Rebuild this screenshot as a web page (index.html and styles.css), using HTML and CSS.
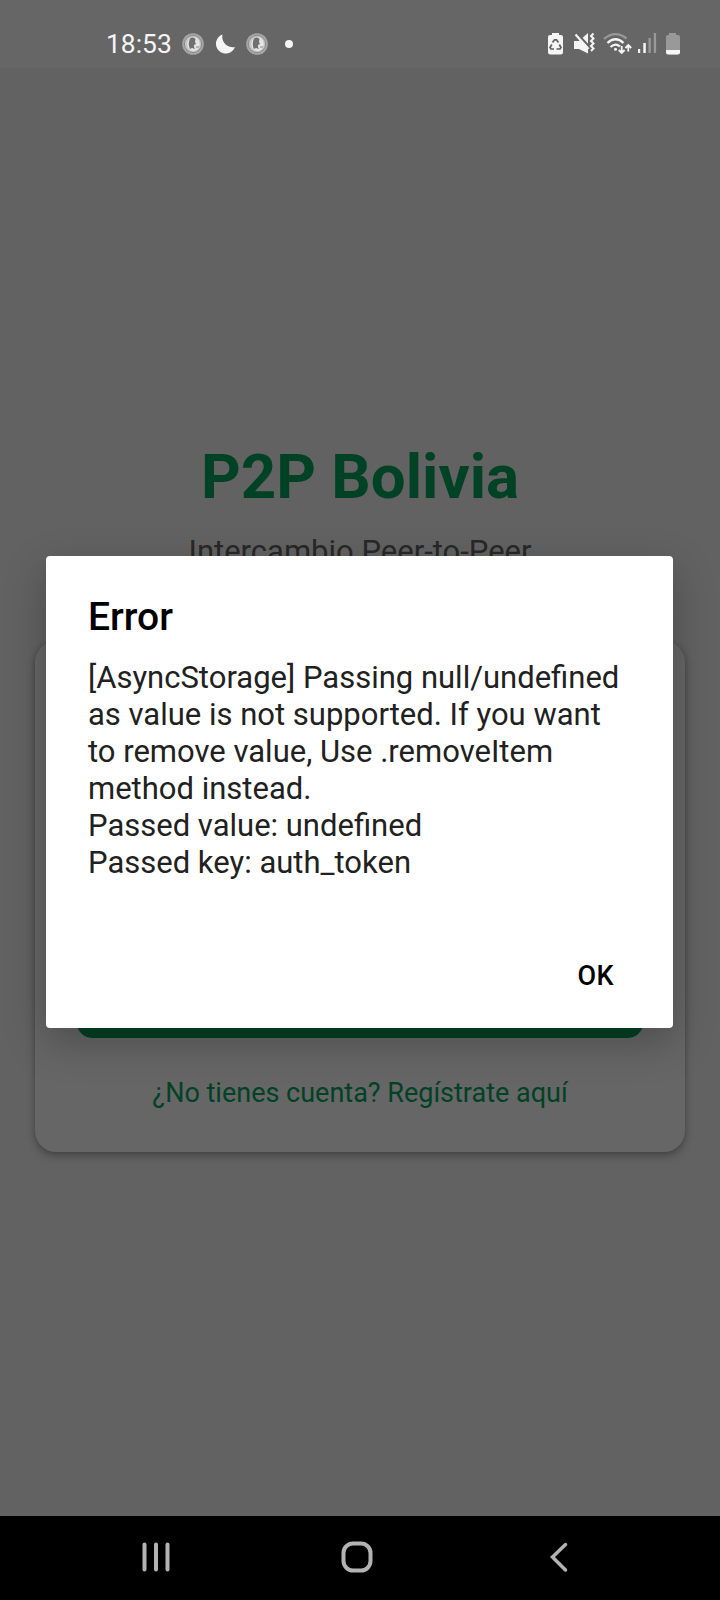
FILE: index.html
```html
<!DOCTYPE html>
<html lang="es">
<head>
<meta charset="utf-8">
<title>P2P Bolivia</title>
<link rel="stylesheet" href="styles.css">
</head>
<body>
<div class="screen">
  <header class="status">
    <span class="clock">18:53</span>
    <svg class="ic-left" width="120" height="32" viewBox="176 28 120 32">
      <defs>
        <g id="coin">
          <circle r="10.8" fill="#a6a6a6"/>
          <circle r="8.600" fill="#c4c4c4" stroke="#8c8c8c" stroke-width="1"/>
          <ellipse cx=".5" cy="0" rx="6.300" ry="7" fill="#e4e4e4"/>
          <path d="M-3-5.500Q0-7.500 2.500-5L2-2L3 0L1 1V3L2 5L-1 4L-3 5Q-5.500 0-3-5.500Z" fill="#707070"/>
          <path d="M3 3H6" stroke="#999" stroke-width="1.2"/>
        </g>
      </defs>
      <use href="#coin" x="193" y="44"/>
      <path d="M222.500 34.500A9.800 9.800 0 1 0 235 47A10.500 10.500 0 0 1 222.500 34.500Z" fill="#f5f5f5"/>
      <use href="#coin" x="257" y="44"/>
      <circle cx="289" cy="44" r="4" fill="#f5f5f5"/>
    </svg>
    <svg class="ic-right" width="144" height="32" viewBox="540 28 144 32">
      <path d="M552 33h7v2h2q2 0 2 2v15q0 2.500-2.500 2.500h-10q-2.500 0-2.500-2.500v-15q0-2 2-2h2z" fill="#f5f5f5"/>
      <g fill="none" stroke="#606060" stroke-width="1.700"><path d="M552.500 42.500L554.500 39.800H556.500L558.500 42.500M559.300 44.500L561 47.500L560 49H556.500M554 49H551L550 47.500L551.800 44.500"/></g>
      <path d="M574 41h5l9-8V53.500L579 49h-5z" fill="#f5f5f5"/>
      <path d="M577.500 34L590 47.500" stroke="#666" stroke-width="2.500"/><path d="M575.500 34.500L588.500 49" stroke="#f5f5f5" stroke-width="2.200"/>
      <path d="M593.500 33.500l-2.500 2.500l2.500 2.500l-2.500 2.500l2.500 2.500l-2.500 2.500l2.500 2.500l-2.500 2.500" fill="none" stroke="#f5f5f5" stroke-width="2"/>
      <g fill="none" stroke="#f5f5f5" stroke-width="2.300"><path d="M604 39Q615 29.500 626.500 38.500" stroke="#999"/><path d="M607.500 43Q615.500 35.500 623.500 43M610.500 47Q615.500 42.500 620 46.500"/><path d="M621.700 46v6.500M618.800 50l2.900 3l2.900-3M628.300 51.500v-6M625.400 48l2.900-3l2.900 3" stroke-width="1.800"/></g>
      <circle cx="615.500" cy="49.300" r="1.500" fill="#f5f5f5"/>
      <path d="M638 53v-4h2.200v4zM643.300 53V43h2.500v10z" fill="#f5f5f5"/>
      <path d="M648.500 53V38h2.300v15zM653.800 53V33h2.300v20z" fill="#999"/>
      <path d="M669 33h7v2h2q2 0 2 2v15q0 2.500-2.500 2.500h-9q-2.500 0-2.500-2.500v-15q0-2 2-2h1z" fill="#999"/>
      <path d="M666 50h14v2q0 2.500-2.500 2.500h-9q-2.500 0-2.500-2.500z" fill="#f5f5f5"/>
    </svg>
  </header>
  <main class="page">
    <h1 class="brand">P2P Bolivia</h1>
    <p class="tagline">Intercambio Peer-to-Peer</p>
    <section class="card">
      <div class="button"></div>
      <a class="register">¿No tienes cuenta? Regístrate aquí</a>
    </section>
  </main>
  <nav class="nav">
    <svg width="30" height="32" viewBox="0 0 30 32"><path d="M3.500 3.500v25M15 3.500v25M26.500 3.500v25" stroke="#b3b3b3" stroke-width="4" stroke-linecap="round"/></svg>
    <svg class="home" width="32" height="32" viewBox="0 0 32 32"><rect x="2.500" y="2.500" width="27" height="27" rx="9.500" fill="none" stroke="#b3b3b3" stroke-width="4"/></svg>
    <svg width="20" height="32" viewBox="0 0 20 32"><path d="M16.500 3.500L3.500 16L16.500 29" fill="none" stroke="#b3b3b3" stroke-width="3.500" stroke-linecap="round"/></svg>
  </nav>
  <div class="dialog" role="alertdialog">
    <h2 class="dialog-title">Error</h2>
    <p class="dialog-text">[AsyncStorage] Passing null/undefined<br>as value is not supported. If you want<br>to remove value, Use .removeItem<br>method instead.<br>Passed value: undefined<br>Passed key: auth_token</p>
    <span class="dialog-ok">OK</span>
  </div>
</div>
</body>
</html>
```
FILE: styles.css
```css
* { box-sizing: border-box; margin: 0; padding: 0; }
body { font-family: Roboto, sans-serif; background: #626262; }
.screen { position: relative; width: 720px; height: 1600px; display: flex; flex-direction: column; overflow: hidden; background: #626262; }
.status { height: 68px; background: #666; display: flex; align-items: flex-start; padding: 28px 36px 0 106px; }
.clock { width: 70px; font-size: 26.4px; line-height: 32px; color: #f5f5f5; white-space: nowrap; }
.ic-right { margin-left: auto; }
.page { flex: 1; display: flex; flex-direction: column; align-items: center; padding: 373px 35px 0; }
.brand { font-size: 61.8px; line-height: 72px; font-weight: 700; color: #004225; white-space: nowrap; }
.tagline { margin-top: 20px; font-size: 31px; line-height: 38px; color: #282828; white-space: nowrap; }
.card { width: 650px; height: 511px; margin-top: 70px; border-radius: 21px; background: #666; box-shadow: 0 4px 9px rgba(0,0,0,.28), 0 0 4px rgba(0,0,0,.12); display: flex; flex-direction: column; align-items: center; justify-content: flex-end; padding-bottom: 43px; }
.button { width: 566px; height: 90px; border-radius: 15px; background: #004225; }
.register { margin-top: 39px; font-size: 27px; line-height: 32px; color: #004225; white-space: nowrap; }
.nav { height: 84px; background: #000; display: flex; align-items: flex-start; padding: 25px 151px 0 141px; justify-content: space-between; }
.home { margin: 0 3px 0 -3px; }
.dialog { position: absolute; left: 46px; top: 556px; width: 627px; height: 472px; padding: 38px 0 0 42px; border-radius: 4px; background: #fff; box-shadow: 0 14px 40px rgba(0,0,0,.25); display: flex; flex-direction: column; }
.dialog-title { font-size: 39px; line-height: 46px; font-weight: 500; color: #000; }
.dialog-text { margin-top: 19px; font-size: 31px; line-height: 37px; color: #212121; white-space: nowrap; }
.dialog-ok { margin: 79px 59px 0 auto; font-size: 27px; line-height: 32px; font-weight: 500; letter-spacing: .4px; color: #000; }
```
